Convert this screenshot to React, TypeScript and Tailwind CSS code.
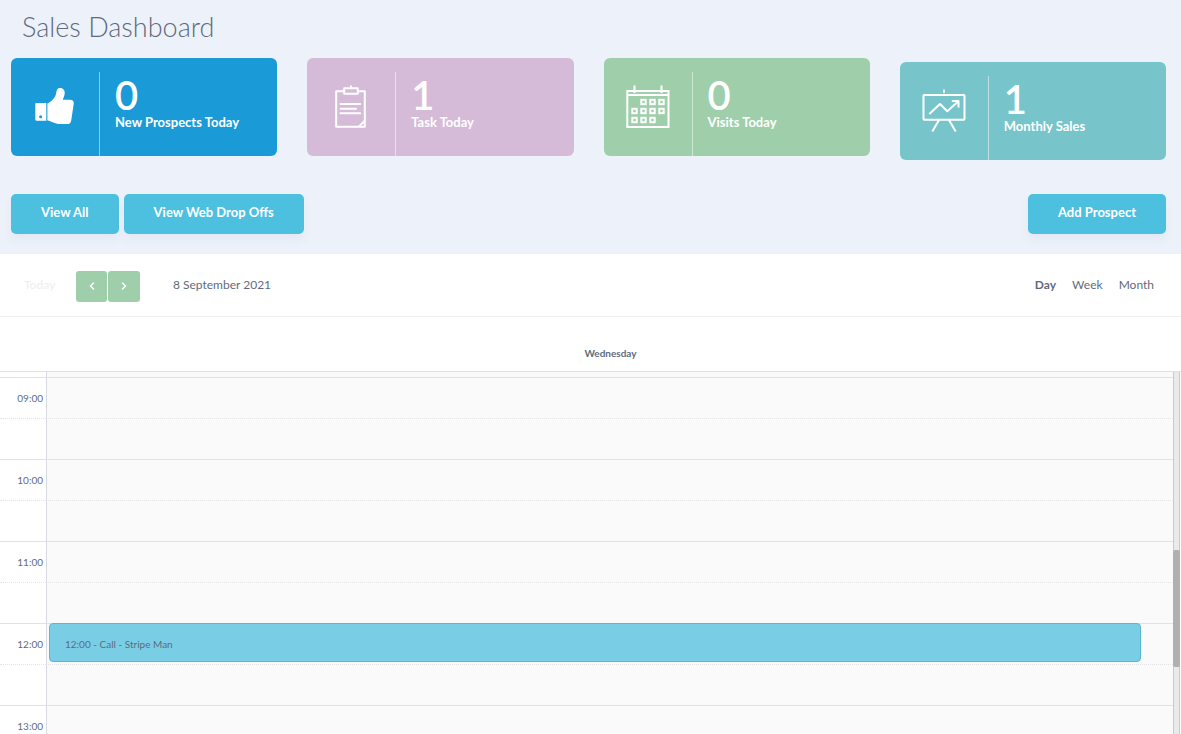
import React from 'react';
import { ChevronLeft, ChevronRight } from 'lucide-react';
import clsx from 'clsx';

interface StatCardProps {
  value: number;
  label: string;
  icon: React.ReactNode;
  className: string;
}

const ThumbIcon = () => (
  <svg viewBox="0 0 44 44" className="size-11" fill="currentColor" aria-hidden="true">
    <path
      fillRule="evenodd"
      d="M3.4 18H13.3V35.7H3.4Q2.3 35.7 2.3 34.6V19.1Q2.3 18 3.4 18ZM7.6 30.2A1.5 1.5 0 1 0 7.6 33.2A1.5 1.5 0 1 0 7.6 30.2Z"
    />
    <path d="M14.4 18.5C18.5 17 22.6 12 23.2 8.3C23.4 4.6 24.6 3 27 3C30.4 3 32 5.5 31.7 8.6C31.4 11 30.5 12.6 29.8 14.8H37.2C40 14.8 41.1 16.6 40.7 19L38.2 35.4C37.8 38 36.3 39 34.2 39H27C22 39 18.4 36.2 14.4 35.5Z" />
  </svg>
);

const ClipboardIcon = () => (
  <svg viewBox="0 0 44 44" className="size-11" fill="none" stroke="currentColor" strokeWidth="2" strokeLinejoin="round" strokeLinecap="round" aria-hidden="true">
    <path d="M14 6.2H7.2V41.8H35.8V6.2H30" />
    <path d="M15.2 3.2H28.8V8.8H15.2ZM22 1.2V3" />
    <path d="M11.5 19H31.2M11.5 23.7H27M11.5 28.2H31.2M30.2 41.4L35.4 36" />
  </svg>
);

const CalendarIcon = () => {
  const days = [
    [17.5, 17], [26.5, 17], [35.5, 17],
    [8.5, 26], [17.5, 26], [26.5, 26], [35.5, 26],
    [8.5, 35], [17.5, 35], [26.5, 35],
  ];
  return (
    <svg viewBox="0 0 44 44" className="size-11" fill="none" stroke="currentColor" strokeWidth="2" aria-hidden="true">
      <path d="M1.3 6H42.5V42H1.3ZM1.3 10H42.5M8.5 0.5V8M35.5 0.5V8" />
      {days.map(([x, y]) => (
        <rect key={`${x}-${y}`} x={x - 2.2} y={y - 2.2} width="4.4" height="4.4" />
      ))}
    </svg>
  );
};

const BoardIcon = () => (
  <svg viewBox="0 0 44 44" className="size-11" fill="none" stroke="currentColor" strokeWidth="2" strokeLinejoin="round" aria-hidden="true">
    <rect x="1.5" y="6" width="41" height="24.7" rx="0.6" />
    <path strokeWidth="1.6" d="M22 0.5V4" />
    <path d="M7.3 25L18 15L25.3 22.3L36.3 12.2M29.8 12H36.5V18.6M17 31L10.3 42.4M27 31L33.7 42.4" />
  </svg>
);

const StatCard: React.FC<StatCardProps> = ({ value, label, icon, className }) => (
  <div className={clsx('flex h-[98px] rounded-md text-white', className)}>
    <div className="flex w-[88px] shrink-0 justify-center pt-[27px]">{icon}</div>
    <div className="mt-3.5 flex-1 border-l border-white/50 pt-1 pl-[15px]">
      <div className="text-[40px] leading-[38px] font-semibold">{value}</div>
      <div className="text-[13px] leading-4 font-bold">{label}</div>
    </div>
  </div>
);

const ActionButton: React.FC<{ children: React.ReactNode }> = ({ children }) => (
  <button
    type="button"
    className="h-10 cursor-pointer rounded-[5px] bg-[#4dbfdf] px-[30px] pb-0.5 text-[13px] font-bold text-white shadow-[0_6px_10px_rgba(80,100,190,0.06)] hover:bg-[#3fb3d4]"
  >
    {children}
  </button>
);

const hours = ['09:00', '10:00', '11:00', '12:00', '13:00'];
const events = [{ start: '12:00', title: '12:00 - Call - Stripe Man' }];
const views = ['Day', 'Week', 'Month'];

export default function App() {
  return (
    <div className="flex h-screen flex-col overflow-hidden bg-[#edf1f9] font-[Lato,sans-serif] text-[#5f6b7d]">
      <header className="pr-[15px] pl-[11px]">
        <h1 className="pt-2 pl-[11px] text-[27px] leading-[38px] font-light">Sales Dashboard</h1>

        <div className="mt-3 grid grid-cols-4 items-start gap-[30px]">
          <StatCard value={0} label="New Prospects Today" icon={<ThumbIcon />} className="bg-[#1b9ad8]" />
          <StatCard value={1} label="Task Today" icon={<ClipboardIcon />} className="bg-[#d6bbd9]" />
          <StatCard value={0} label="Visits Today" icon={<CalendarIcon />} className="bg-[#9ecfaa]" />
          <StatCard value={1} label="Monthly Sales" icon={<BoardIcon />} className="mt-1 bg-[#77c5cb]" />
        </div>

        <div className="flex justify-between pt-[34px] pb-5">
          <div className="flex gap-[5px]">
            <ActionButton>View All</ActionButton>
            <ActionButton>View Web Drop Offs</ActionButton>
          </div>
          <ActionButton>Add Prospect</ActionButton>
        </div>
      </header>

      <section className="flex min-h-0 flex-1 flex-col bg-white">
        {/* Toolbar */}
        <div className="flex h-[63px] shrink-0 items-center border-b border-[#efefef] pr-[27px] pl-6 text-xs">
          <button type="button" disabled className="w-[52px] text-left text-[#eeeeee]">
            Today
          </button>
          <div className="flex gap-px pt-0.5">
            <button type="button" aria-label="Previous day" className="grid h-[31px] w-[31px] cursor-pointer place-items-center rounded-[3px] bg-[#9ecfaa] text-white">
              <ChevronLeft className="size-3" strokeWidth={3} />
            </button>
            <button type="button" aria-label="Next day" className="grid h-[31px] w-8 cursor-pointer place-items-center rounded-[3px] bg-[#9ecfaa] text-white">
              <ChevronRight className="size-3" strokeWidth={3} />
            </button>
          </div>
          <h2 className="ml-[33px]">8 September 2021</h2>
          <div className="ml-auto flex gap-4">
            {views.map((view) => (
              <button key={view} type="button" className={clsx('cursor-pointer', view === 'Day' && 'font-bold')}>
                {view}
              </button>
            ))}
          </div>
        </div>

        <div className="flex h-[55px] shrink-0 items-end justify-center border-b border-[#e0e2e5] pb-2.5 pl-10 text-[10px] leading-4 font-bold">
          Wednesday
        </div>

        {/* Time grid */}
        <div className="flex min-h-0 flex-1 overflow-hidden pr-px">
          <div className="min-w-0 flex-1">
            <table className="w-full table-fixed border-separate border-spacing-0 text-[10px]">
              <colgroup>
                <col className="w-[46px]" />
                <col />
              </colgroup>
              <tbody>
                <tr className="h-[5px]">
                  <td className="p-0" />
                  <td className="border-l border-[#d6d9df] bg-[#fafafa] p-0" />
                </tr>
                {hours.map((hour) => (
                  <React.Fragment key={hour}>
                    <tr className="h-[41px]">
                      <th scope="row" className="border-t border-[#e0e2e5] p-0 pr-[3px] text-right font-normal">
                        {hour}
                      </th>
                      <td className="relative border-t border-l border-t-[#e0e2e5] border-l-[#d6d9df] bg-[#fafafa] p-0">
                        {events
                          .filter((event) => event.start === hour)
                          .map((event) => (
                            <a
                              key={event.title}
                              href="#event"
                              className="absolute -top-px right-8 left-0.5 flex h-[39px] items-center rounded-sm border border-[#5bb8d0] bg-[#79cee6] px-[15px] pt-1"
                            >
                              {event.title}
                            </a>
                          ))}
                      </td>
                    </tr>
                    <tr className="h-[41px]">
                      <td className="border-t border-dotted border-[#e2e4e7] p-0" />
                      <td className="border-t border-l border-t-[#e2e4e7] border-l-[#d6d9df] bg-[#fafafa] p-0 [border-top-style:dotted]" />
                    </tr>
                  </React.Fragment>
                ))}
              </tbody>
            </table>
          </div>

          <div className="w-[7px] shrink-0 border-x border-[#cacaca] bg-[#eaeaea] pt-[178px]">
            <div className="-mx-px h-[117px] rounded-xs bg-[#b0b0b0]" />
          </div>
        </div>
      </section>
    </div>
  );
}
